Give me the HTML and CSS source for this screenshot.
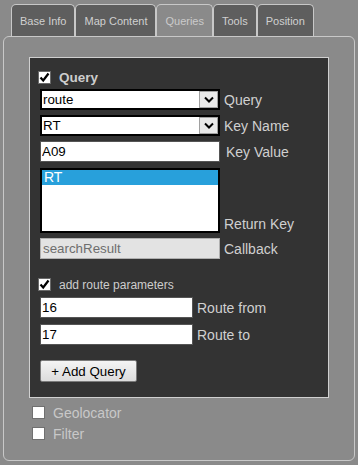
FILE: index.html
```html
<!DOCTYPE html>
<html>
<head>
    <meta charset="UTF-8">
    <title>Queries</title>
    <link rel="stylesheet" href="styles.css">
</head>
<body>
    <div class="tabs">
        <div class="tab">Base Info</div>
        <div class="tab">Map Content</div>
        <div class="tab active">Queries</div>
        <div class="tab">Tools</div>
        <div class="tab">Position</div>
    </div>
    <div class="panel">
        <div class="query-box">
            <label class="check-row head">
                <span class="box"><svg width="11" height="11" viewBox="0 0 11 11"><polyline points="1.5,5.5 4.2,8.5 9.5,1.5" fill="none" stroke="#000" stroke-width="2.2"/></svg></span>
                Query
            </label>
            <div class="field">
                <div class="select">route<span class="arrow"><svg width="10" height="7" viewBox="0 0 10 7"><polyline points="1,1.5 5,5.5 9,1.5" fill="none" stroke="#000" stroke-width="2"/></svg></span></div>
                <span class="lbl">Query</span>
            </div>
            <div class="field">
                <div class="select">RT<span class="arrow"><svg width="10" height="7" viewBox="0 0 10 7"><polyline points="1,1.5 5,5.5 9,1.5" fill="none" stroke="#000" stroke-width="2"/></svg></span></div>
                <span class="lbl">Key Name</span>
            </div>
            <div class="field">
                <input class="text" type="text" value="A09">
                <span class="lbl key-value">Key Value</span>
            </div>
            <div class="field list-field">
                <div class="listbox">
                    <div class="opt sel">RT</div>
                </div>
                <span class="lbl">Return Key</span>
            </div>
            <div class="field">
                <input class="text readonly" type="text" value="searchResult" readonly>
                <span class="lbl">Callback</span>
            </div>
            <label class="check-row route-check">
                <span class="box"><svg width="11" height="11" viewBox="0 0 11 11"><polyline points="1.5,5.5 4.2,8.5 9.5,1.5" fill="none" stroke="#000" stroke-width="2.2"/></svg></span>
                add route parameters
            </label>
            <div class="field route-field">
                <input class="text short" type="text" value="16">
                <span class="lbl">Route from</span>
            </div>
            <div class="field route-field">
                <input class="text short" type="text" value="17">
                <span class="lbl">Route to</span>
            </div>
            <button class="add-btn">+ Add Query</button>
        </div>
        <label class="check-row plain">
            <span class="box"></span>
            Geolocator
        </label>
        <label class="check-row plain">
            <span class="box"></span>
            Filter
        </label>
    </div>
</body>
</html>
```

FILE: styles.css
```css
body {
    margin: 0;
    background-color: #8a8a8a;
    font-family: "Liberation Sans", Arial, sans-serif;
}

.tabs {
    display: flex;
    padding: 4px 0 0 11px;
}

.tab {
    height: 32px;
    box-sizing: border-box;
    padding: 0 8px;
    border: 1px solid #c8c8c8;
    border-bottom: none;
    border-radius: 5px 5px 0 0;
    background-color: #5e5e5e;
    color: #d0d0d0;
    font-size: 11px;
    display: flex;
    align-items: center;
}

.tab.active {
    background-color: #8a8a8a;
    color: #cacaca;
}

.panel {
    margin-left: 3px;
    width: 352px;
    box-sizing: border-box;
    border: 1px solid #c8c8c8;
    border-radius: 6px;
    padding: 20px 0 20px 25px;
    background-color: #8a8a8a;
}

.query-box {
    width: 300px;
    box-sizing: border-box;
    border: 1px solid #d0d0d0;
    background-color: #333333;
    padding: 13px 0 15px 10px;
}

.check-row {
    display: flex;
    align-items: center;
    gap: 8px;
    height: 13px;
    margin-left: -2px;
    color: #cdcdcd;
}

.box {
    width: 13px;
    height: 13px;
    box-sizing: border-box;
    border: 1px solid #6a6a6a;
    background-color: #fff;
    display: flex;
    flex-shrink: 0;
}

.head {
    font-size: 13.5px;
    font-weight: 700;
}

.field {
    display: flex;
    align-items: center;
    margin-top: 5px;
}

.lbl {
    margin-left: 4px;
    font-size: 14px;
    color: #d0d0d0;
}

.lbl.key-value {
    margin-left: 6px;
}

.select {
    position: relative;
    width: 180px;
    height: 21px;
    box-sizing: border-box;
    border: 2px solid #000;
    background-color: #fff;
    padding-left: 1px;
    font-size: 13.33px;
    line-height: 17px;
    color: #000;
}

.select .arrow {
    position: absolute;
    right: 0;
    top: 0;
    width: 19px;
    height: 17px;
    box-sizing: border-box;
    background-color: #e8e8e8;
    border: 1px solid #a0a0a0;
    display: flex;
    align-items: center;
    justify-content: center;
}

.text {
    width: 180px;
    height: 21px;
    box-sizing: border-box;
    margin: 0;
    border: 1px solid #555;
    background-color: #fff;
    padding: 0 1px;
    font-family: "Liberation Sans", Arial, sans-serif;
    font-size: 13.33px;
    color: #000;
    outline: none;
}

.text.readonly {
    background-color: #e3e3e3;
    border-color: #b0b0b0;
    color: #6e6e6e;
    padding-left: 2px;
}

.text.short {
    width: 153px;
}

.list-field {
    align-items: flex-end;
    margin-top: 6px;
}

.list-field .lbl {
    margin-bottom: 1px;
}

.listbox {
    width: 180px;
    height: 65px;
    box-sizing: border-box;
    border: 2px solid #000;
    background-color: #fff;
}

.listbox .opt {
    height: 15px;
    line-height: 15px;
    padding-left: 2px;
    font-size: 14px;
}

.listbox .opt.sel {
    background-color: #28a0db;
    color: #fff;
}

.route-check {
    margin-top: 19px;
    font-size: 12px;
}

.route-field {
    margin-top: 6px;
}

.add-btn {
    display: block;
    margin-top: 15px;
    width: 97px;
    height: 22px;
    padding: 0;
    border: 1px solid #7a7a7a;
    border-radius: 2px;
    background: linear-gradient(to bottom, #f4f4f4, #dcdcdc);
    font-family: "Liberation Sans", Arial, sans-serif;
    font-size: 13.33px;
    color: #000;
}

.plain {
    margin-top: 8px;
    margin-left: 3px;
    font-size: 14px;
    color: #c8c8c8;
}

.plain .box {
    border-color: #707070;
}
```
